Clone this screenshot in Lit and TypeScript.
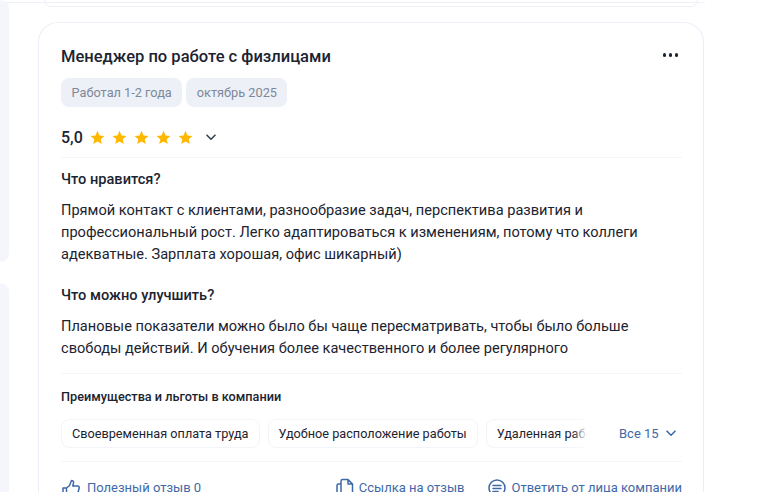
import { LitElement, html, css, svg } from 'lit';
import { customElement } from 'lit/decorators.js';

const star = svg`<path d="M7.5 .8l2 4.6 5 .5-3.8 3.3 1.1 4.9-4.3-2.6-4.3 2.6 1.1-4.9L.5 5.9l5-.5z" fill="#ffb800"/>`;

const chevron = (color: string) => html`
  <svg class="chevron" width="10" height="7" viewBox="0 0 10 7" fill="none">
    <path d="M1 1.200L5 5.200l4-4" stroke=${color} stroke-width="1.600" stroke-linecap="round" stroke-linejoin="round"/>
  </svg>`;

const BENEFITS = ['Своевременная оплата труда', 'Удобное расположение работы', 'Удаленная работа'];

@customElement('app-root')
export class AppRoot extends LitElement {
  static styles = css`
    :host {
      display: block;
      width: 768px;
      height: 492px;
      overflow: hidden;
      background: #fff;
      font-family: Roboto, 'Noto Sans', sans-serif;
      color: #1c2330;
    }
    .strip {
      width: 705px;
      height: 1px;
      margin-top: 2px;
      margin-bottom: -3px;
      background: #eff0f8;
    }
    .page {
      display: flex;
      gap: 29px;
    }

    /* ---- left column, only its edge is visible ---- */
    .side {
      width: 9px;
      flex: none;
      display: flex;
      flex-direction: column;
      gap: 21px;
    }
    .side-block {
      background: #f5f6fc;
      border-radius: 0 16px 16px 0;
    }
    .side-block.first { height: 262px; }
    .side-block.second { height: 300px; }

    /* ---- feed ---- */
    .feed {
      width: 666px;
      flex: none;
      display: flex;
      flex-direction: column;
      gap: 15px;
    }
    .prev {
      height: 6px;
      margin: 0 6px;
      border: 1px solid #eef0f8;
      border-top: 0;
      border-radius: 0 0 16px 16px;
    }
    .card {
      border: 1px solid #eaeef7;
      border-top-color: #eff0f8;
      border-radius: 20px;
      padding: 23px 21px 0 22px;
      height: 560px;
    }

    .head {
      display: flex;
      justify-content: space-between;
      align-items: flex-start;
    }
    .title {
      font-size: 16.550px;
      font-weight: 500;
      line-height: 22px;
    }
    .more {
      display: flex;
      gap: 2.500px;
      margin: 7px 4px 0 0;
    }
    .more i {
      width: 3.500px;
      height: 3.500px;
      border-radius: 50%;
      background: #1c2330;
    }

    .tags {
      display: flex;
      gap: 4px;
      margin-top: 10px;
    }
    .tag {
      height: 29px;
      padding: 0 10.500px;
      display: flex;
      align-items: center;
      border-radius: 8px;
      background: #edf0f7;
      color: #7d8899;
      font-size: 12.750px;
    }

    .rating {
      display: flex;
      align-items: center;
      margin-top: 18px;
      padding-bottom: 8px;
      border-bottom: 1px solid #f5f6fa;
      height: 24px;
    }
    .score {
      font-size: 16px;
      font-weight: 500;
      margin-right: 7px;
    }
    .stars {
      display: flex;
      gap: 7px;
      margin-right: 13px;
    }
    .chevron { display: block; }

    .heading {
      font-size: 14.600px;
      font-weight: 500;
      line-height: 22px;
      margin-top: 10px;
    }
    .text {
      font-size: 14.600px;
      line-height: 22px;
      margin: 9px 0 0;
      white-space: nowrap;
    }
    .heading.next { margin-top: 19px; }

    .benefits {
      margin-top: 14px;
      border-top: 1px solid #f5f6fa;
      border-bottom: 1px solid #f5f6fa;
      padding: 14px 0 13px;
    }
    .benefits-title {
      font-size: 12.700px;
      font-weight: 500;
      line-height: 18px;
    }
    .benefit-row {
      display: flex;
      align-items: center;
      margin-top: 13px;
    }
    .chips {
      position: relative;
      width: 526px;
      display: flex;
      gap: 8px;
      overflow: hidden;
      flex: none;
    }
    .chips::after {
      content: '';
      position: absolute;
      top: 0;
      right: 0;
      bottom: 0;
      width: 14px;
      background: linear-gradient(to right, rgba(255, 255, 255, 0), #fff);
    }
    .chip {
      flex: none;
      height: 27px;
      padding: 0 10px;
      display: flex;
      align-items: center;
      border: 1px solid #f3f4f9;
      border-radius: 8px;
      font-size: 12.700px;
      white-space: nowrap;
    }
    .all {
      display: flex;
      align-items: center;
      gap: 7px;
      margin-left: 32px;
      font-size: 13px;
      color: #3e69a8;
      white-space: nowrap;
    }

    .actions {
      display: flex;
      align-items: center;
      justify-content: space-between;
      margin-top: 16px;
      font-size: 13px;
      color: #3e69a8;
    }
    .action {
      display: flex;
      align-items: center;
      gap: 6px;
      line-height: 18px;
      white-space: nowrap;
    }
    .right {
      display: flex;
      gap: 24px;
    }
    .right .action { gap: 5px; }
  `;

  render() {
    return html`
      <div class="strip"></div>
      <div class="page">
        <div class="side">
          <div class="side-block first"></div>
          <div class="side-block second"></div>
        </div>
        <div class="feed">
          <div class="prev"></div>
          <article class="card">
            <div class="head">
              <div class="title">Менеджер по работе с физлицами</div>
              <div class="more"><i></i><i></i><i></i></div>
            </div>
            <div class="tags">
              <span class="tag">Работал 1-2 года</span>
              <span class="tag">октябрь 2025</span>
            </div>
            <div class="rating">
              <span class="score">5,0</span>
              <div class="stars">
                ${[0, 1, 2, 3, 4].map(() => html`<svg width="15" height="15" viewBox="0 0 15 15">${star}</svg>`)}
              </div>
              ${chevron('#3b4350')}
            </div>
            <div class="heading">Что нравится?</div>
            <p class="text">
              Прямой контакт с клиентами, разнообразие задач, перспектива развития и<br>
              профессиональный рост. Легко адаптироваться к изменениям, потому что коллеги<br>
              адекватные. Зарплата хорошая, офис шикарный)
            </p>
            <div class="heading next">Что можно улучшить?</div>
            <p class="text">
              Плановые показатели можно было бы чаще пересматривать, чтобы было больше<br>
              свободы действий. И обучения более качественного и более регулярного
            </p>
            <section class="benefits">
              <div class="benefits-title">Преимущества и льготы в компании</div>
              <div class="benefit-row">
                <div class="chips">
                  ${BENEFITS.map(b => html`<span class="chip">${b}</span>`)}
                </div>
                <span class="all">Все 15 ${chevron('#3e69a8')}</span>
              </div>
            </section>
            <div class="actions">
              <span class="action">
                <svg width="20" height="20" viewBox="0 0 20 20" fill="none" stroke="#3e69a8" stroke-width="1.500" stroke-linejoin="round">
                  <path d="M2 10h3.500v8H2zM5.500 10l3-2.500L10.500 2.500c1.500 0 2.300 1 2 2.500l-.7 3h5c1 0 1.700 1 1.400 2l-1.700 6.500c-.2 1-1 1.500-2 1.500H5.500"/>
                </svg>
                Полезный отзыв 0
              </span>
              <div class="right">
                <span class="action">
                  <svg width="18" height="20" viewBox="0 0 18 20" fill="none" stroke="#3e69a8" stroke-width="1.500" stroke-linejoin="round">
                    <path d="M5 6H2.500C1.700 6 1 6.700 1 7.500V18h9M5 14V3c0-.8.700-1.500 1.500-1.500H12L16.500 6v8c0 .8-.7 1.500-1.500 1.500H5M12 1.500V6h4.500"/>
                  </svg>
                  Ссылка на отзыв
                </span>
                <span class="action">
                  <svg width="18" height="20" viewBox="0 0 18 20" fill="none" stroke="#3e69a8" stroke-width="1.500" stroke-linecap="round">
                    <circle cx="9" cy="10" r="8"/>
                    <path d="M5 7.500h8M5 10.500h8M5 13.500h5"/>
                  </svg>
                  Ответить от лица компании
                </span>
              </div>
            </div>
          </article>
        </div>
      </div>
    `;
  }
}
